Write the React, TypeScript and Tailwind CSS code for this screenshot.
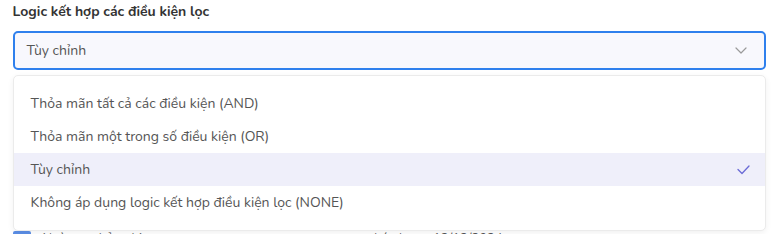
import React from 'react';

const OPTIONS = [
  'Thỏa mãn tất cả các điều kiện (AND)',
  'Thỏa mãn một trong số điều kiện (OR)',
  'Tùy chỉnh',
  'Không áp dụng logic kết hợp điều kiện lọc (NONE)',
];

export default function App() {
  const selected = 'Tùy chỉnh';

  return (
    <div className="w-[777px] h-[234px] overflow-hidden bg-white font-['Nunito','Lato',sans-serif]">
      <div className="relative pl-[12.5px] pr-[11px] pt-[2px]">
        <div className="text-[14px] leading-[20px] font-bold text-[#333]">Logic kết hợp các điều kiện lọc</div>

        <button className="mt-[9px] w-full h-[39px] flex items-center justify-between rounded-[5px] border-2 border-[#2f80ed] bg-[#f8f8fd] pl-[12px] pr-[16px] text-left">
          <span className="text-[14px] text-[#555]">{selected}</span>
          <svg width="12" height="7" viewBox="0 0 12 7" fill="none" className="mr-[1px]">
            <path d="M1 1l5 5 5-5" stroke="#9a9a9a" strokeWidth="1.2" strokeLinecap="round" strokeLinejoin="round" />
          </svg>
        </button>

        {/* table row peeking out under the menu */}
        <div className="mt-[161px] flex items-start gap-[12px] h-[20px] text-[13px] leading-[16px] text-[#555]">
          <span className="w-[18px] h-[14px] rounded-[2px] bg-[#5b8ee6]" />
          <span>Ngày tạo bản ghi</span>
          <span className="ml-[220px]">Lớn hơn</span>
          <span>12/12/2024</span>
        </div>

        <div className="absolute left-[12.5px] right-[11px] top-[75px] h-[156px] rounded-[5px] border border-[#ebebeb] bg-white shadow-[0_2px_6px_rgba(0,0,0,0.06)] py-[11px]">
          {OPTIONS.map((o) => {
            const active = o === selected;
            return (
              <div
                key={o}
                className={`h-[33px] flex items-center justify-between pl-[17px] pr-[15px] text-[14px] text-[#555] ${active ? 'bg-[#efeffa]' : ''}`}
              >
                <span>{o}</span>
                {active && (
                  <svg width="13" height="10" viewBox="0 0 13 10" fill="none">
                    <path d="M1 4.5l4 4L12 1" stroke="#6b6bd6" strokeWidth="1.3" strokeLinecap="round" strokeLinejoin="round" />
                  </svg>
                )}
              </div>
            );
          })}
        </div>
      </div>
    </div>
  );
}
